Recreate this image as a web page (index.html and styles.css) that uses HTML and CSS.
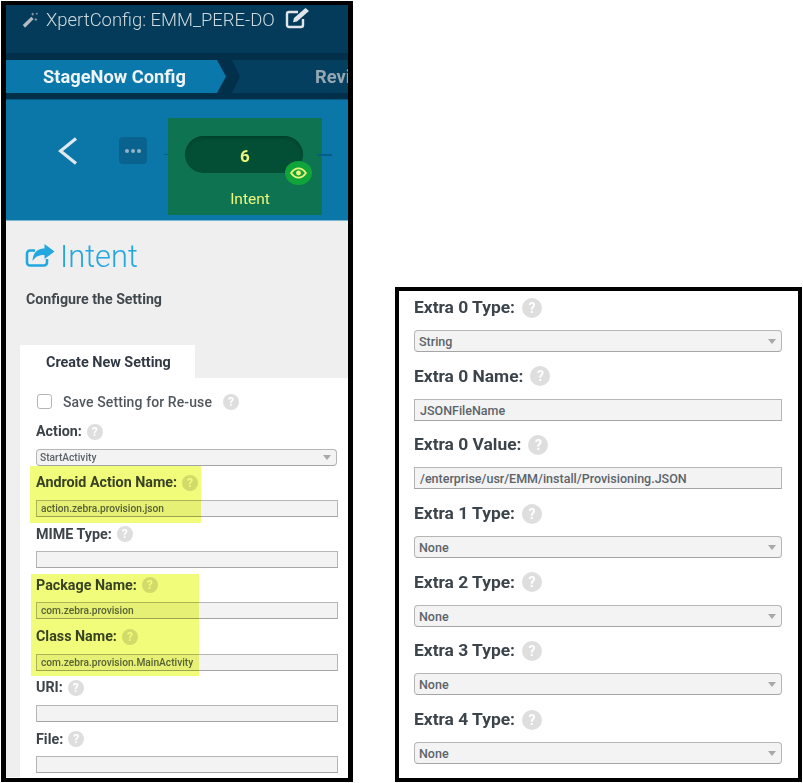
FILE: index.html
```html
<!DOCTYPE html>
<html lang="en">
<head>
    <meta charset="UTF-8">
    <meta name="viewport" content="width=device-width, initial-scale=1.0">
    <title>XpertConfig Intent</title>
    <link rel="stylesheet" href="styles.css">
</head>
<body>
<div class="page">
    <div class="panel panel-left">
        <div class="title-bar">
            <svg class="wand" viewBox="0 0 20 20" width="18" height="18">
                <path d="M2 15.500 11.500 6.500 14 9 4.500 18.500Z" fill="#b4bcc0"/>
                <path d="M13 2v3M11.500 3.500h3M17.500 2v2M16.500 3h2M16.500 8v3M15 9.500h3" stroke="#8fa3ad" stroke-width="1"/>
            </svg>
            <span class="title-text">XpertConfig: EMM_PERE-DO</span>
            <svg class="edit" viewBox="0 0 27 24" width="27" height="24">
                <path d="M19 13v6a2 2 0 0 1-2 2H5a2 2 0 0 1-2-2V8a2 2 0 0 1 2-2h9" fill="none" stroke="#dfe5e8" stroke-width="2.400"/>
                <path d="M10 12 21.500 2l3.500 3L13 15.500l-4 .8Z" fill="#dfe5e8"/>
            </svg>
        </div>
        <div class="tab-bar">
            <div class="step-tab active-tab">StageNow Config</div>
            <div class="step-tab next-tab">Review</div>
        </div>
        <div class="stepper">
            <svg class="back" viewBox="0 0 20 28" width="20" height="28">
                <path d="M18 1.500 2.500 14 18 26.500" fill="none" stroke="#dfe8ec" stroke-width="3.200"/>
            </svg>
            <div class="more">
                <svg viewBox="0 0 16 4" width="16" height="4">
                    <circle cx="2" cy="2" r="2" fill="#8fb4c9"/>
                    <circle cx="8" cy="2" r="2" fill="#8fb4c9"/>
                    <circle cx="14" cy="2" r="2" fill="#8fb4c9"/>
                </svg>
            </div>
            <div class="line line-a"></div>
            <div class="step-box">
                <div class="pill">6</div>
                <div class="badge">
                    <svg viewBox="0 0 24 16" width="17" height="12">
                        <path d="M1.500 8C5 3 8 1.500 12 1.500S19 3 22.500 8C19 13 16 14.500 12 14.500S5 13 1.500 8Z" fill="none" stroke="#eef57c" stroke-width="2.400"/>
                        <circle cx="12" cy="8" r="3.400" fill="#eef57c"/>
                    </svg>
                </div>
                <div class="step-name">Intent</div>
            </div>
            <div class="line line-b"></div>
        </div>
        <div class="content">
            <div class="heading">
                <svg viewBox="0 0 30 24" width="30" height="24">
                    <path d="M22 15v3.500a3 3 0 0 1-3 3H5a3 3 0 0 1-3-3V9.500a3 3 0 0 1 3-3h5" fill="none" stroke="#22a7e0" stroke-width="2.600"/>
                    <path d="M29.500 7.500 19.500 0v4.500C13 4.500 8 8 7.500 17 10.500 12.500 14 11 19.500 11v4Z" fill="#22a7e0"/>
                </svg>
                <span>Intent</span>
            </div>
            <div class="sub">Configure the Setting</div>
            <div class="tab-label">Create New Setting</div>
            <div class="form">
                <div class="save-row">
                    <span class="check"></span>
                    <span class="save-text">Save Setting for Re-use</span>
                    <span class="help">?</span>
                </div>
                <div class="field">
                    <div class="label">Action:<span class="help">?</span></div>
                    <div class="box select-box">StartActivity<i class="arrow"></i></div>
                </div>
                <div class="field">
                    <div class="label">Android Action Name:<span class="help">?</span></div>
                    <div class="box">action.zebra.provision.json</div>
                </div>
                <div class="field">
                    <div class="label">MIME Type:<span class="help">?</span></div>
                    <div class="box"></div>
                </div>
                <div class="field">
                    <div class="label">Package Name:<span class="help">?</span></div>
                    <div class="box">com.zebra.provision</div>
                </div>
                <div class="field">
                    <div class="label">Class Name:<span class="help">?</span></div>
                    <div class="box">com.zebra.provision.MainActivity</div>
                </div>
                <div class="field">
                    <div class="label">URI:<span class="help">?</span></div>
                    <div class="box"></div>
                </div>
                <div class="field">
                    <div class="label">File:<span class="help">?</span></div>
                    <div class="box"></div>
                </div>
            </div>
        </div>
        <div class="marker marker-a"></div>
        <div class="marker marker-b"></div>
    </div>

    <div class="panel panel-right">
        <div class="field">
            <div class="label">Extra 0 Type:<span class="help">?</span></div>
            <div class="box select-box">String<i class="arrow"></i></div>
        </div>
        <div class="field">
            <div class="label">Extra 0 Name:<span class="help">?</span></div>
            <div class="box">JSONFileName</div>
        </div>
        <div class="field">
            <div class="label">Extra 0 Value:<span class="help">?</span></div>
            <div class="box">/enterprise/usr/EMM/install/Provisioning.JSON</div>
        </div>
        <div class="field">
            <div class="label">Extra 1 Type:<span class="help">?</span></div>
            <div class="box select-box">None<i class="arrow"></i></div>
        </div>
        <div class="field">
            <div class="label">Extra 2 Type:<span class="help">?</span></div>
            <div class="box select-box">None<i class="arrow"></i></div>
        </div>
        <div class="field">
            <div class="label">Extra 3 Type:<span class="help">?</span></div>
            <div class="box select-box">None<i class="arrow"></i></div>
        </div>
        <div class="field">
            <div class="label">Extra 4 Type:<span class="help">?</span></div>
            <div class="box select-box">None<i class="arrow"></i></div>
        </div>
    </div>
</div>
</body>
</html>
```

FILE: styles.css
```css
* {
    box-sizing: border-box;
}

body {
    margin: 0;
    background: #fff;
    font-family: Roboto, "Liberation Sans", sans-serif;
}

.page {
    display: flex;
    align-items: flex-start;
    width: 803px;
    height: 783px;
    overflow: hidden;
    padding: 1px 0 0 1px;
}

.panel {
    position: relative;
    background: #fff;
    overflow: hidden;
}

.panel-left {
    flex: none;
    width: 352px;
    height: 781px;
    border: solid #000;
    border-width: 4px 5px 4px 5px;
}

.panel-right {
    flex: none;
    width: 407px;
    height: 495px;
    margin: 286px 0 0 42px;
    border: 4px solid #000;
    padding: 6px 16px 0 15px;
}

/* header */
.title-bar {
    display: flex;
    align-items: center;
    height: 48px;
    padding: 0 0 18px 15px;
    background: #043b5a;
    color: #cfdade;
}

.title-text {
    margin-left: 7px;
    font-size: 18.450px;
    font-weight: 300;
    white-space: nowrap;
}

.edit {
    margin: 0 0 4px 9px;
}

.tab-bar {
    display: flex;
    height: 47px;
    padding-top: 7px;
    background: #02304a;
    border-bottom: 1px solid #07597f;
}

.step-tab {
    display: flex;
    flex: none;
    align-items: center;
    height: 33px;
    font-size: 18.300px;
    font-weight: 700;
    white-space: nowrap;
}

.active-tab {
    width: 220px;
    padding-left: 37px;
    background: #0a78aa;
    color: #eef4f7;
    clip-path: polygon(0 0, 211px 0, 100% 50%, 211px 100%, 0 100%);
}

.next-tab {
    width: 140px;
    margin-left: 6px;
    padding-left: 83px;
    background: #043f60;
    color: #94a7b2;
    clip-path: polygon(0 0, 100% 0, 100% 100%, 0 100%, 8px 50%);
}

/* stepper */
.stepper {
    display: flex;
    align-items: flex-start;
    height: 120px;
    padding: 18px 0 0 52px;
    background: #0b76a8;
}

.back {
    flex: none;
    margin-top: 19px;
}

.more {
    display: flex;
    flex: none;
    align-items: center;
    justify-content: center;
    width: 28px;
    height: 27px;
    margin: 19px 0 0 41px;
    border-radius: 4px;
    background: #0a628f;
}

.line {
    flex: none;
    height: 1px;
    margin-top: 36px;
    background: #075d85;
}

.line-a {
    width: 4px;
    margin-left: 17px;
}

.step-box {
    position: relative;
    flex: none;
    width: 154px;
    height: 97px;
    background: #0e7350;
    text-align: center;
}

.pill {
    width: 118px;
    height: 37px;
    margin: 18px 0 0 17px;
    padding-left: 2px;
    border-radius: 19px;
    background: #024f35;
    box-shadow: inset 0 2px 3px rgba(0, 0, 0, 0.2);
    color: #eef57c;
    font-size: 17px;
    font-weight: 700;
    line-height: 41px;
}

.badge {
    position: absolute;
    top: 43px;
    left: 117px;
    display: flex;
    align-items: center;
    justify-content: center;
    width: 27px;
    height: 24px;
    border-radius: 50%;
    background: #10a53a;
}

.step-name {
    margin: 17px 0 0 10px;
    color: #eef57c;
    font-size: 15.500px;
    line-height: 18px;
}

.line-b {
    position: relative;
    left: -5px;
    width: 15px;
    height: 2px;
}

/* body of the left panel */
.content {
    height: 557px;
    padding-top: 1px;
    background: #efefef;
    border-top: 1px solid #7db4cf;
}

.heading {
    display: flex;
    align-items: center;
    gap: 5px;
    height: 30px;
    margin: 19px 0 0 19px;
    color: #22a7e0;
    font-size: 30.800px;
    font-weight: 300;
}

.sub {
    margin: 20px 0 0 20px;
    color: #40484e;
    font-size: 14.200px;
    font-weight: 700;
    line-height: 16px;
}

.tab-label {
    width: 175px;
    height: 33px;
    margin: 38px 0 0 14px;
    padding-left: 26px;
    background: #fff;
    color: #313a44;
    font-size: 14.400px;
    font-weight: 700;
    line-height: 35px;
}

.form {
    height: 399px;
    margin-left: 14px;
    padding: 12px 10px 0 16px;
    background: #fff;
}

.save-row {
    display: flex;
    align-items: center;
    height: 23px;
    margin-bottom: 10px;
    color: #50585e;
    font-size: 14px;
    font-weight: 500;
}

.check {
    width: 15px;
    height: 15px;
    margin: 0 11px 0 1px;
    border: 1px solid #b5b5b5;
    border-radius: 3px;
}

.save-text {
    margin-right: 11px;
    letter-spacing: 0.100px;
}

.field {
    height: 68.700px;
}

.label {
    display: flex;
    align-items: center;
    gap: 7px;
    color: #3c444b;
    font-size: 17.400px;
    font-weight: 700;
    line-height: 21px;
    white-space: nowrap;
}

.help {
    display: inline-block;
    flex: none;
    width: 20px;
    height: 20px;
    border-radius: 50%;
    background: #dedede;
    color: #fff;
    font-size: 14px;
    font-weight: 700;
    line-height: 20px;
    text-align: center;
}

.box {
    position: relative;
    height: 22px;
    margin-top: 12px;
    padding-left: 5px;
    border: 1px solid #b6b6b6;
    border-bottom-color: #a5a5a5;
    background: #f3f3f3;
    color: #5c646a;
    font-size: 12.500px;
    font-weight: 500;
    line-height: 21px;
    white-space: nowrap;
}

.select-box {
    padding-left: 4px;
    border-radius: 4px;
}

.arrow {
    position: absolute;
    top: 50%;
    right: 5px;
    margin-top: -2px;
    border: 4px solid transparent;
    border-top: 5px solid #a8a8a8;
    border-bottom: 0;
}

/* the form in the left panel is smaller than the one on the right */
.form .field {
    height: 51.300px;
}

.form .label {
    gap: 5px;
    font-size: 14.300px;
    line-height: 17px;
}

.form .help {
    width: 16px;
    height: 16px;
    font-size: 12px;
    line-height: 16px;
}

.form .box {
    height: 17px;
    margin-top: 8.500px;
    padding-left: 4px;
    font-size: 10.200px;
    line-height: 15px;
}

.form .select-box {
    margin-right: 1px;
    padding-left: 3px;
}

/* yellow highlighter strokes drawn over the form */
.marker {
    position: absolute;
    background: #f1fc7a;
    mix-blend-mode: multiply;
}

.marker-a {
    left: 24px;
    top: 461px;
    width: 171px;
    height: 57px;
}

.marker-b {
    left: 25px;
    top: 569px;
    width: 168px;
    height: 102px;
}
```
